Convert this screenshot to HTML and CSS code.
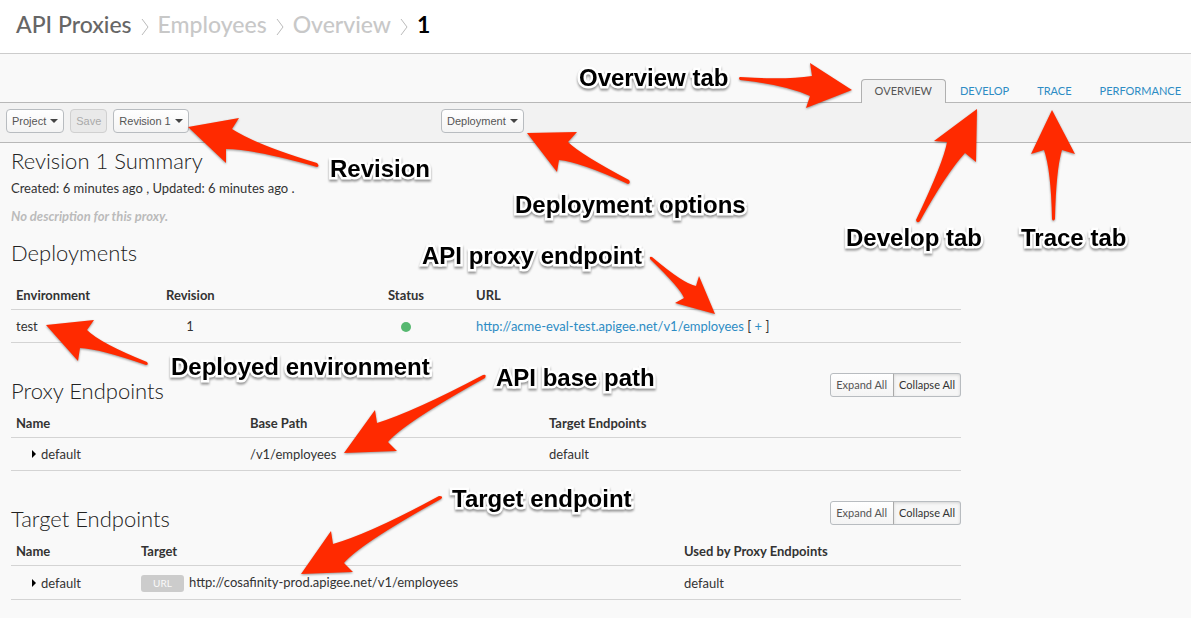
FILE: index.html
```html
<!DOCTYPE html>
<html lang="en">
<head>
<meta charset="utf-8">
<title>API Proxies</title>
<link rel="stylesheet" href="styles.css">
</head>
<body>
<header class="header">
  <nav class="crumbs" aria-label="Breadcrumb">
    <a class="crumb crumb-root" href="#">API Proxies</a>
    <svg class="chevron" viewBox="0 0 8 18"><path d="M1 1 L7 9 L1 17"/></svg>
    <a class="crumb" href="#">Employees</a>
    <svg class="chevron" viewBox="0 0 8 18"><path d="M1 1 L7 9 L1 17"/></svg>
    <a class="crumb" href="#">Overview</a>
    <svg class="chevron" viewBox="0 0 8 18"><path d="M1 1 L7 9 L1 17"/></svg>
    <span class="crumb crumb-current">1</span>
  </nav>
</header>
<nav class="tabs" aria-label="Views">
  <a class="tab tab-active" href="#">OVERVIEW</a>
  <a class="tab" href="#">DEVELOP</a>
  <a class="tab" href="#">TRACE</a>
  <a class="tab" href="#">PERFORMANCE</a>
</nav>
<div class="toolbar">
  <div class="toolbar-main">
    <button class="btn" type="button">Project<i class="caret"></i></button>
    <button class="btn" type="button" disabled>Save</button>
    <button class="btn" type="button">Revision 1<i class="caret"></i></button>
  </div>
  <button class="btn" type="button">Deployment<i class="caret"></i></button>
</div>
<main class="content">
  <section>
    <h2 class="title">Revision 1 Summary</h2>
    <p class="meta">Created: 6 minutes ago , Updated: 6 minutes ago .</p>
    <p class="description">No description for this proxy.</p>
  </section>
  <section class="deployments">
    <h2 class="title">Deployments</h2>
    <table class="table">
      <colgroup><col class="w-150"><col class="w-180"><col class="w-130"><col></colgroup>
      <thead><tr><th>Environment</th><th>Revision</th><th class="center">Status</th><th>URL</th></tr></thead>
      <tbody><tr>
        <td>test</td><td><span class="revision">1</span></td>
        <td class="center"><span class="status" role="img" aria-label="Deployed"></span></td>
        <td><a class="link" href="#">http://acme-eval-test.apigee.net/v1/employees</a> [ <a class="link" href="#">+</a> ]</td>
      </tr></tbody>
    </table>
  </section>
  <section class="endpoints">
    <div class="heading">
      <h2 class="title">Proxy Endpoints</h2>
      <div class="group"><button class="btn btn-small" type="button">Expand All</button><button class="btn btn-small btn-pressed" type="button">Collapse All</button></div>
    </div>
    <table class="table">
      <colgroup><col class="w-234"><col class="w-299"><col></colgroup>
      <thead><tr><th>Name</th><th>Base Path</th><th>Target Endpoints</th></tr></thead>
      <tbody><tr><td><span class="expander"></span>default</td><td>/v1/employees</td><td>default</td></tr></tbody>
    </table>
  </section>
  <section class="endpoints">
    <div class="heading">
      <h2 class="title">Target Endpoints</h2>
      <div class="group"><button class="btn btn-small" type="button">Expand All</button><button class="btn btn-small btn-pressed" type="button">Collapse All</button></div>
    </div>
    <table class="table">
      <colgroup><col class="w-125"><col class="w-543"><col></colgroup>
      <thead><tr><th>Name</th><th>Target</th><th>Used by Proxy Endpoints</th></tr></thead>
      <tbody><tr><td><span class="expander"></span>default</td><td><div class="target"><span class="badge">URL</span>http://cosafinity-prod.apigee.net/v1/employees</div></td><td>default</td></tr></tbody>
    </table>
  </section>
</main>
<div class="notes">
  <svg class="arrows" width="1191" height="618" viewBox="0 0 1191 618" aria-hidden="true">
    <path d="M740 77 Q785 80 812 76 L810 63 L852 90 L806 108 L810 96 Q785 85 740 80 Q738 78 740 77Z"/>
    <path d="M977 109 L934 141 L947 142 Q944 161 916 220 Q917 224 920 221 Q946 174 965 153 L976 162Z"/>
    <path d="M1052 110 L1031 154 L1044 150 Q1051 170 1052 219 Q1053 222 1055 219 Q1056 170 1062 150 L1075 154Z"/>
    <path d="M188 127 L239 118 L232 129 Q257 145 317 163 Q320 166 317 167 Q253 149 226 149 L226 163Z"/>
    <path d="M527 133 L577 132 L568 142 Q580 154 629 180 Q631 183 628 184 Q580 162 559 160 L557 172Z"/>
    <path d="M715 314 L699 276 L696 286 Q684 284 652 257 Q649 256 650 259 Q681 289 684 298 L675 303Z"/>
    <path d="M46 325 L94 320 L87 330 Q100 343 147 362 Q149 365 146 365 Q100 349 80 348 L78 361Z"/>
    <path d="M344 453 L375 410 L377 423 Q415 411 483 375 Q487 374 485 378 Q404 423 388 442 L397 451Z"/>
    <path d="M301 574 L331 531 L333 544 Q371 533 439 496 Q444 496 441 499 Q360 544 344 563 L353 572Z"/>
  </svg>
  <span class="note note-overview">Overview tab</span>
  <span class="note note-revision">Revision</span>
  <span class="note note-deployment">Deployment options</span>
  <span class="note note-develop">Develop tab</span>
  <span class="note note-trace">Trace tab</span>
  <span class="note note-proxy">API proxy endpoint</span>
  <span class="note note-environment">Deployed environment</span>
  <span class="note note-path">API base path</span>
  <span class="note note-target">Target endpoint</span>
</div>
</body>
</html>
```
FILE: styles.css
```css
* { box-sizing: border-box; }
body { margin: 0; position: relative; min-height: 100vh; background: #f9f9f9; color: #333; font: 13px/18px Lato, sans-serif; overflow-x: hidden; }
h2, p { margin: 0; }
a { text-decoration: none; }

.header { background: #fff; border-bottom: 1px solid #ccc; padding: 9px 16px 14px; }
.crumbs { display: flex; align-items: center; gap: 9px; }
.crumb { color: #c8c8c8; font-size: 23px; line-height: 30px; font-weight: 500; }
.crumb-root { color: #666; }
.crumb-current { color: #000; font-weight: 700; }
.chevron { width: 8px; height: 18px; margin-top: 5px; fill: none; stroke: #bbb; }

.tabs { display: flex; justify-content: flex-end; align-items: flex-end; height: 49px; border-bottom: 1px solid #b8b8b8; }
.tab { padding: 2px 14px 3px; margin-bottom: -1px; border: 1px solid transparent; border-bottom: 0; font-size: 11px; color: #2d8cc4; }
.tab + .tab { border-left: 0; border-right: 0; }
.tab:last-child { padding-right: 10px; }
.tab-active { padding: 2px 13px 3px; color: #555; background: #f2f2f2; border-color: #b0b0b0; border-radius: 4px 4px 0 0; }

.toolbar { display: flex; padding: 6px; background: #f2f2f2; border-bottom: 1px solid #b8b8b8; height: 40px; }
.toolbar-main { display: flex; gap: 6px; flex: 0 0 435px; }
.btn { height: 24px; padding: 0 5px; border: 1px solid #b8bcc0; border-radius: 4px; background: linear-gradient(#fff, #f4f4f4); color: #555; font: 11px/16px "Liberation Sans", Arial, sans-serif; white-space: nowrap; align-self: flex-start; }
.btn:disabled { background: #e9e9e9; border-color: #d0d0d0; color: #aaa; }
.caret { display: inline-block; margin-left: 4px; vertical-align: 2px; border: 4px solid transparent; border-top-color: #444; border-bottom: 0; }

.content { max-width: 972px; padding: 0 11px 18px; }
.title { font-size: 22px; line-height: 36px; font-weight: 300; color: #222; }
.description { margin-top: 10px; font-size: 13px; font-style: italic; font-weight: 700; color: #bbb; }
.deployments { margin-top: 10px; }
.endpoints { margin-top: 30px; }
.heading { display: flex; justify-content: space-between; }
.group { display: flex; }
.btn-small { padding: 0 6px 0 5px; font-family: Lato, sans-serif; border-radius: 3px 0 0 3px; }
.btn-pressed { padding: 0 5px; border-left-color: #aaa; margin-left: -1px; border-radius: 0 3px 3px 0; background: #f6f6f6; box-shadow: inset 0 1px 3px #d4d4d4; color: #333; }

.table { width: 100%; table-layout: fixed; border-collapse: separate; border-spacing: 0; }
.table th { padding: 5px; text-align: left; font-weight: 700; border-bottom: 1px solid #d4d4d4; }
.deployments th { padding-top: 15px; }
.table td { padding: 7px 5px; border-bottom: 1px solid #d4d4d4; }
.table .center { text-align: center; }
.w-125 { width: 125px; }
.w-130 { width: 130px; }
.w-150 { width: 150px; }
.w-180 { width: 180px; }
.w-234 { width: 234px; }
.w-299 { width: 299px; }
.w-543 { width: 543px; }
.link { color: #2d8cc4; }
.revision { display: inline-block; width: 48px; text-align: center; }
.status { display: inline-block; width: 10px; height: 10px; border-radius: 50%; background: #56b870; vertical-align: -1px; }
.expander { display: inline-block; margin: 0 5px 0 16px; vertical-align: 1px; border: 4px solid transparent; border-left: 4px solid #000; border-right: 0; }
.target { display: flex; align-items: flex-start; }
.badge { width: 43px; margin: 2px 5px 0 0; border-radius: 3px; background: #ccc; color: #fafafa; font-size: 10px; line-height: 17px; text-align: center; }

.notes { position: absolute; inset: 0; overflow: hidden; pointer-events: none; }
.arrows { position: absolute; left: 0; top: 0; fill: #ff2a00; filter: drop-shadow(0 1px 1px #0006); }
.note { position: absolute; color: #000; font: 700 24px/28px "Liberation Sans", Arial, sans-serif; white-space: nowrap; -webkit-text-stroke: 5px #fff; paint-order: stroke fill; filter: drop-shadow(0 2px 1px #0006); }
.note-overview { left: 579px; top: 64px; }
.note-revision { left: 330px; top: 155px; }
.note-deployment { left: 515px; top: 191px; }
.note-develop { left: 846px; top: 224px; }
.note-trace { left: 1021px; top: 224px; }
.note-proxy { left: 422px; top: 242px; }
.note-environment { left: 171px; top: 353px; }
.note-path { left: 496px; top: 364px; }
.note-target { left: 452px; top: 485px; }
```
